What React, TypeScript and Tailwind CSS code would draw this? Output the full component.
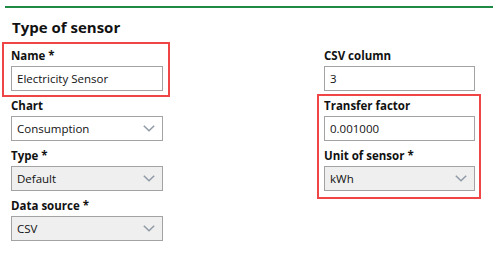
import React from "react";

const Chevron = () => (
  <svg width="12" height="7" viewBox="0 0 12 7" className="shrink-0">
    <polyline points="0.8,0.8 6,5.8 11.2,0.8" fill="none" stroke="#8f9aa6" strokeWidth="1.5" />
  </svg>
);

const Label = ({ children }: { children: React.ReactNode }) => (
  <div className="h-[20px] leading-[19px] text-[11.5px] font-bold text-[#111] whitespace-nowrap">{children}</div>
);

const Input = ({ value }: { value: string }) => (
  <div className="h-[25px] border border-[#a3a3a3] bg-white flex items-center pl-[5px] pt-[1px] text-[11.5px] text-[#111]">
    {value}
  </div>
);

const Select = ({ value, disabled }: { value: string; disabled?: boolean }) => (
  <div
    className={
      disabled
        ? "h-[25px] border border-[#a3a3a3] bg-[#efefef] flex items-center justify-between pl-[5px] pr-[7px] text-[11.5px] text-[#111]"
        : "h-[25px] border border-[#a3a3a3] bg-white flex items-center justify-between pl-[5px] pr-[7px] text-[11.5px] text-[#111]"
    }
  >
    <span className="pt-[1px]">{value}</span>
    <Chevron />
  </div>
);

const Field = ({ children }: { children: React.ReactNode }) => <div className="mb-[5px]">{children}</div>;

export default function App() {
  return (
    <div className="relative w-[493px] h-[254px] bg-white overflow-hidden font-['Open_Sans','Noto_Sans',sans-serif]">
      <div className="pt-[6px] pl-[5px]">
        <div className="h-[2px] bg-[#1f8a46]" />
      </div>
      <h2 className="mt-[9px] pl-[12px] h-[20px] leading-[20px] text-[15px] font-bold text-[#111]">Type of sensor</h2>
      <div className="mt-[9px] flex pl-[11px] gap-[161px]">
        <div className="w-[152px]">
          <Field>
            <Label>Name *</Label>
            <Input value="Electricity Sensor" />
          </Field>
          <Field>
            <Label>Chart</Label>
            <Select value="Consumption" />
          </Field>
          <Field>
            <Label>Type *</Label>
            <Select value="Default" disabled />
          </Field>
          <Field>
            <Label>Data source *</Label>
            <Select value="CSV" disabled />
          </Field>
        </div>
        <div className="w-[151px]">
          <Field>
            <Label>CSV column</Label>
            <Input value="3" />
          </Field>
          <Field>
            <Label>Transfer factor</Label>
            <Input value="0.001000" />
          </Field>
          <Field>
            <Label>Unit of sensor *</Label>
            <Select value="kWh" disabled />
          </Field>
        </div>
      </div>
      <div className="absolute left-[2px] top-[42px] w-[168px] h-[55px] border-2 border-[#ef4545]" />
      <div className="absolute left-[317px] top-[94px] w-[164px] h-[105px] border-2 border-[#ef4545]" />
    </div>
  );
}
